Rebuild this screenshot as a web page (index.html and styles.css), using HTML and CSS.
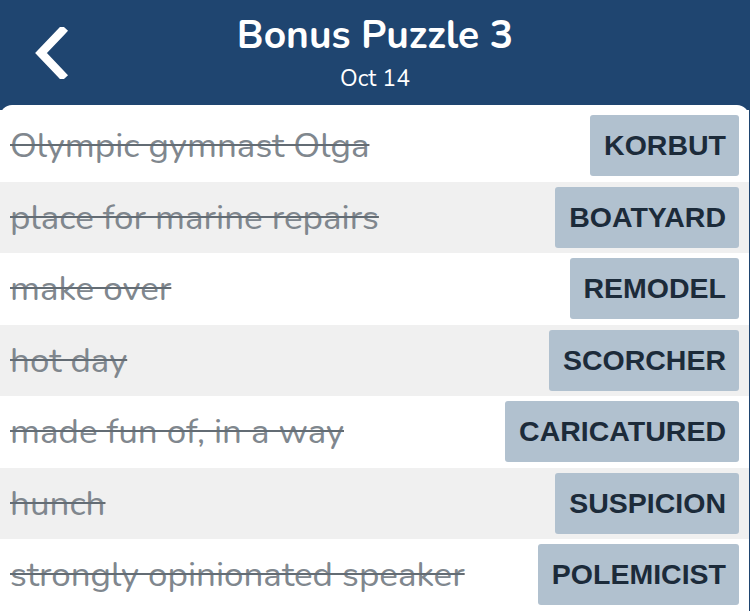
FILE: index.html
```html
<!DOCTYPE html>
<html>
<head>
<meta charset="utf-8">
<link rel="stylesheet" href="styles.css">
</head>
<body>
<header class="topbar">
  <button class="back" aria-label="Back">
    <svg width="36" height="52" viewBox="0 0 36 52"><path d="M29 4 L8 26 L29 48" fill="none" stroke="#fff" stroke-width="8.5" stroke-linecap="square" stroke-linejoin="miter"/></svg>
  </button>
  <div class="titles">
    <h1 class="title">Bonus Puzzle 3</h1>
    <div class="date">Oct 14</div>
  </div>
</header>
<main class="card">
  <div class="row"><span class="clue">Olympic gymnast Olga</span><span class="answer">KORBUT</span></div>
  <div class="row alt"><span class="clue">place for marine repairs</span><span class="answer">BOATYARD</span></div>
  <div class="row"><span class="clue">make over</span><span class="answer">REMODEL</span></div>
  <div class="row alt"><span class="clue">hot day</span><span class="answer">SCORCHER</span></div>
  <div class="row"><span class="clue">made fun of, in a way</span><span class="answer">CARICATURED</span></div>
  <div class="row alt"><span class="clue">hunch</span><span class="answer">SUSPICION</span></div>
  <div class="row"><span class="clue">strongly opinionated speaker</span><span class="answer">POLEMICIST</span></div>
</main>
</body>
</html>
```
FILE: styles.css
```css
* { box-sizing: border-box; }
html, body { margin: 0; padding: 0; }
body {
  width: 750px;
  height: 611px;
  overflow: hidden;
  background: #1f4570;
  font-family: "Nunito", "Lato", "Open Sans", sans-serif;
}
.topbar {
  height: 105px;
  position: relative;
  display: flex;
  justify-content: center;
  align-items: flex-start;
  color: #fff;
}
.back {
  position: absolute;
  left: 33px;
  top: 27px;
  background: none;
  border: 0;
  padding: 0;
  width: 36px;
  height: 52px;
}
.back svg { display: block; }
.titles {
  display: flex;
  flex-direction: column;
  align-items: center;
  padding-top: 11px;
}
.title {
  margin: 0;
  font-size: 39px;
  font-weight: 700;
  line-height: 50px;
}
.date {
  font-size: 23px;
  line-height: 32px;
  margin-top: 2px;
}
.card {
  background: #fff;
  border-radius: 12px 12px 0 0;
  padding-top: 5px;
  height: 506px;
  margin-right: 1px;
}
.row {
  height: 71.5px;
  display: flex;
  align-items: center;
  justify-content: space-between;
  padding: 0 10px;
  background: #fff;
}
.row.alt { background: #f0f0f0; }
.clue {
  font-size: 35px;
  color: #80878e;
  text-decoration: line-through;
  text-decoration-thickness: 2px;
  text-decoration-color: #636c74;
  white-space: nowrap;
}
.answer {
  background: #b1c1cf;
  color: #1c2b3a;
  font-family: "Liberation Sans", Arial, sans-serif;
  font-weight: 700;
  font-size: 28.5px;
  height: 61px;
  display: flex;
  align-items: center;
  padding: 0 13px 0 14px;
  border-radius: 3px;
}
```
